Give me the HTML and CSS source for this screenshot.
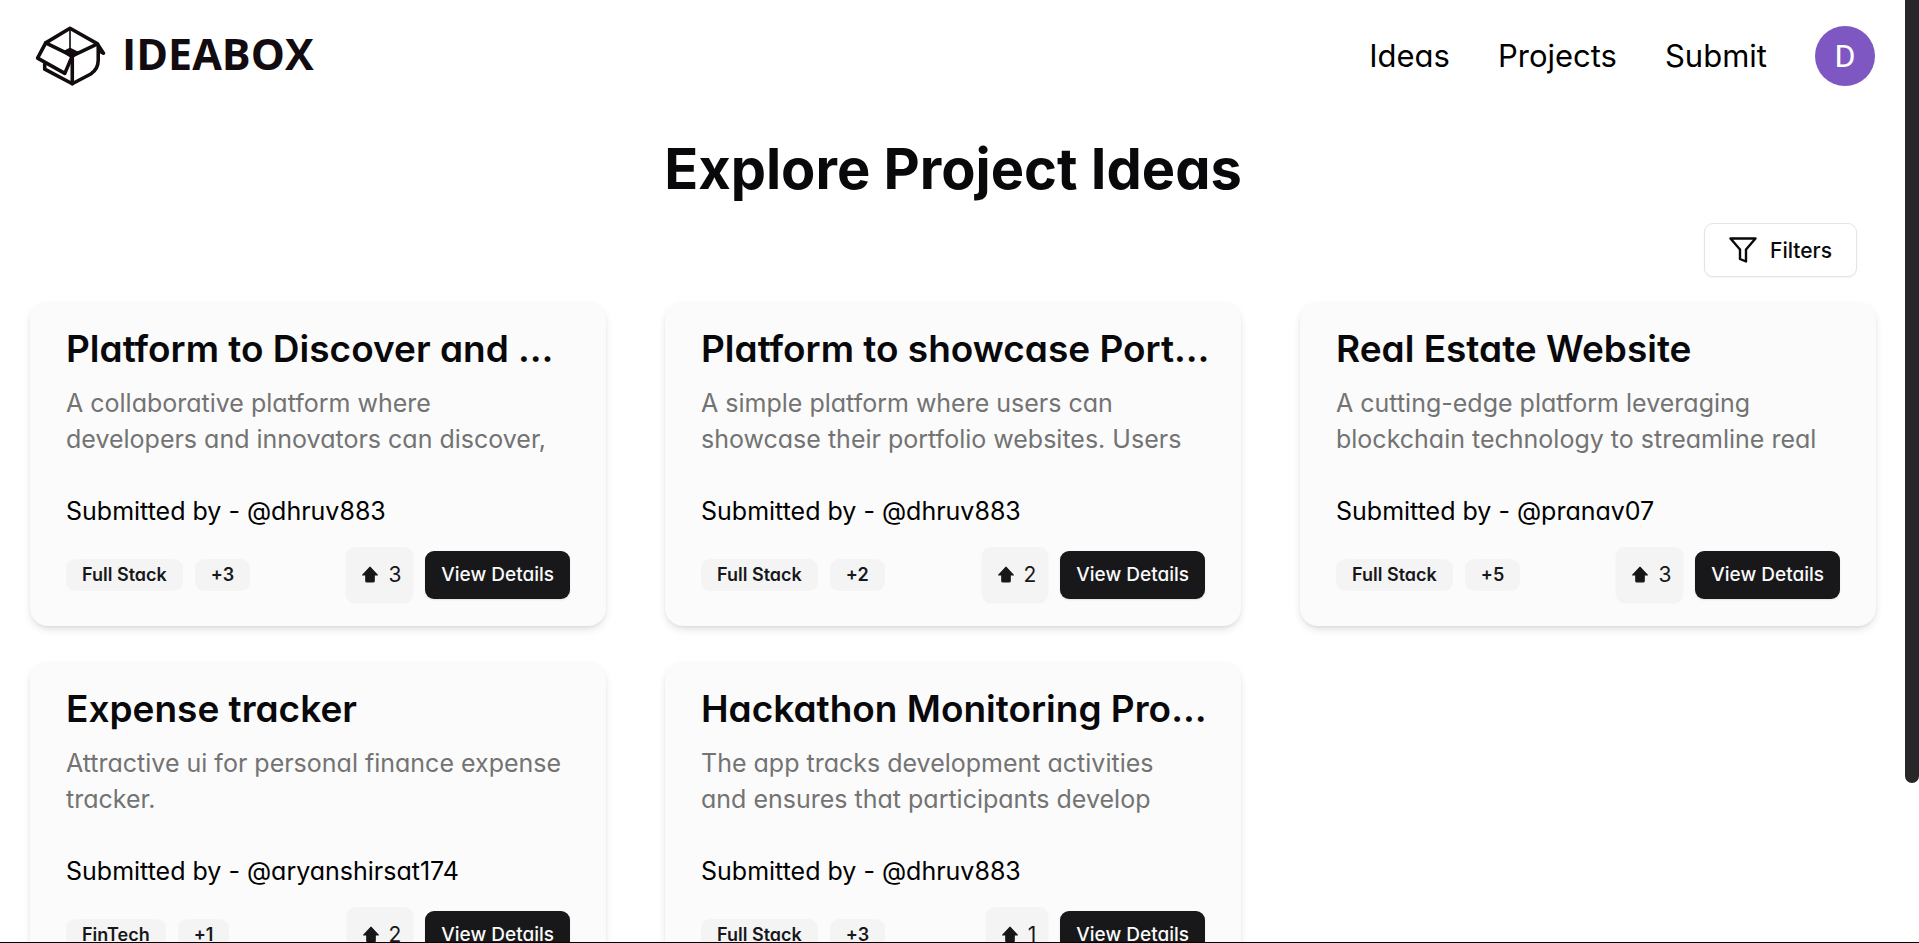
FILE: index.html
```html
<!DOCTYPE html>
<html lang="en">
<head>
<meta charset="utf-8">
<title>Ideabox</title>
<link rel="stylesheet" href="styles.css">
</head>
<body>
<svg class="sprite" aria-hidden="true">
  <symbol id="arrow" viewBox="0 0 16 16"><path d="M8 1 15 8.500H12V14Q12 15 11 15H5Q4 15 4 14V8.500H1Z" fill="currentColor" stroke="currentColor" stroke-width="1" stroke-linejoin="round"/></symbol>
</svg>
<header class="header">
  <a class="brand" href="#">
    <svg class="brand-icon" viewBox="45 45 215 185" fill="none" stroke="currentColor" stroke-width="11" stroke-linejoin="round" stroke-linecap="round">
      <path d="M158 137 76 97 151 52 236 100Z"/>
      <path d="M151 54V125" stroke-width="5"/>
      <path d="M130 125 151 114 176 126 158 144Z" fill="currentColor" stroke-width="4"/>
      <path d="M76 97 51 144 135 191 158 137"/>
      <path d="M73 162V178L158 223V137"/>
      <path d="M158 223 215 193Q238 178 238 150V104L254 129 242 122"/>
    </svg>
    <span class="brand-name">IDEABOX</span>
  </a>
  <nav class="nav">
    <a href="#">Ideas</a>
    <a href="#">Projects</a>
    <a href="#">Submit</a>
    <button class="avatar" type="button">D</button>
  </nav>
</header>
<main class="main">
  <h1 class="heading">Explore Project Ideas</h1>
  <div class="toolbar">
    <button class="filters" type="button">
      <svg class="filters-icon" viewBox="0 0 28 26" fill="none" stroke="currentColor" stroke-width="2.400" stroke-linejoin="round"><path d="M1.500 1.500H26.500L17 12.500V24.500L11 22V12.500Z"/></svg>
      Filters
    </button>
  </div>
  <section class="grid">
    <article class="card">
      <h2 class="title">Platform to Discover and …</h2>
      <p class="desc">A collaborative platform where<br>developers and innovators can discover,</p>
      <p class="author">Submitted by - @dhruv883</p>
      <div class="row"><span class="tag">Full Stack</span><span class="tag">+3</span>
        <button class="vote" type="button"><svg class="arrow"><use href="#arrow"/></svg>3</button><button class="details" type="button">View Details</button></div>
    </article>
    <article class="card">
      <h2 class="title">Platform to showcase Port…</h2>
      <p class="desc">A simple platform where users can<br>showcase their portfolio websites. Users</p>
      <p class="author">Submitted by - @dhruv883</p>
      <div class="row"><span class="tag">Full Stack</span><span class="tag">+2</span>
        <button class="vote" type="button"><svg class="arrow"><use href="#arrow"/></svg>2</button><button class="details" type="button">View Details</button></div>
    </article>
    <article class="card">
      <h2 class="title">Real Estate Website</h2>
      <p class="desc">A cutting-edge platform leveraging<br>blockchain technology to streamline real</p>
      <p class="author">Submitted by - @pranav07</p>
      <div class="row"><span class="tag">Full Stack</span><span class="tag">+5</span>
        <button class="vote" type="button"><svg class="arrow"><use href="#arrow"/></svg>3</button><button class="details" type="button">View Details</button></div>
    </article>
    <article class="card">
      <h2 class="title">Expense tracker</h2>
      <p class="desc">Attractive ui for personal finance expense<br>tracker.</p>
      <p class="author">Submitted by - @aryanshirsat174</p>
      <div class="row"><span class="tag">FinTech</span><span class="tag">+1</span>
        <button class="vote" type="button"><svg class="arrow"><use href="#arrow"/></svg>2</button><button class="details" type="button">View Details</button></div>
    </article>
    <article class="card">
      <h2 class="title">Hackathon Monitoring Pro…</h2>
      <p class="desc">The app tracks development activities<br>and ensures that participants develop</p>
      <p class="author">Submitted by - @dhruv883</p>
      <div class="row"><span class="tag">Full Stack</span><span class="tag">+3</span>
        <button class="vote" type="button"><svg class="arrow"><use href="#arrow"/></svg>1</button><button class="details" type="button">View Details</button></div>
    </article>
  </section>
</main>
<div class="scroll-thumb"></div>
<div class="bottom-line"></div>
</body>
</html>
```
FILE: styles.css
```css
* { box-sizing: border-box; margin: 0; }
html { height: 100%; }
body {
  height: 100vh;
  overflow: hidden;
  padding-right: 14px;
  background: #fff;
  color: #09090b;
  font-family: Inter, "Open Sans", sans-serif;
  font-feature-settings: "cv11";
}
button { font: inherit; font-feature-settings: inherit; color: inherit; border: 0; cursor: pointer; }
a { color: inherit; text-decoration: none; }
.sprite { display: none; }

.header { display: flex; align-items: center; justify-content: space-between; padding: 26px 30px 25px 35px; }
.brand { display: flex; align-items: center; gap: 16px; color: #120b10; }
.brand-icon { width: 71px; height: 60px; }
.brand-name { padding-bottom: 4px; font: 700 43px/56px "Open Sans", sans-serif; }
.nav { display: flex; align-items: center; gap: 48px; font-size: 31px; line-height: 36px; color: #000; }
.avatar { width: 60px; height: 60px; padding: 0; border-radius: 50%; background: #7e57c2; color: #fff; font: 400 32px/60px Roboto, sans-serif; }

.main { padding: 0 29px 36px 30px; }
.heading { padding: 26px 0 22px; font-size: 56px; line-height: 64px; font-weight: 700; text-align: center; }
.toolbar { display: flex; justify-content: flex-end; padding: 0 19px 25px 0; }
.filters {
  display: flex; align-items: center; gap: 13px;
  height: 54px; padding: 0 24px;
  border: 1px solid #e4e4e7; border-radius: 9px; background: #fff;
  box-shadow: 0 1px 2px rgba(0, 0, 0, .05);
  font-size: 21px; font-weight: 500;
}
.filters-icon { width: 28px; height: 26px; }

.grid { display: grid; grid-template-columns: repeat(3, minmax(0, 1fr)); gap: 36px 59px; }
.card {
  padding: 23px 36px 24px;
  border-radius: 18px; background: #fbfbfb;
  box-shadow: 0 4px 8px -1px rgba(0, 0, 0, .12), 0 2px 4px -2px rgba(0, 0, 0, .1);
}
.title { margin-bottom: 12px; font-size: 37px; line-height: 48px; font-weight: 600; white-space: nowrap; }
.desc { height: 72px; margin-bottom: 36px; font-size: 25px; line-height: 36px; color: #737373; white-space: nowrap; }
.author { margin-bottom: 18px; font-size: 25px; line-height: 36px; color: #000; }
.row { display: flex; align-items: center; gap: 12px; color: #18181b; }
.tag { padding: 0 16px; border-radius: 9px; background: #f4f4f5; font-size: 18px; line-height: 32px; font-weight: 600; }
.vote {
  display: flex; align-items: center; gap: 9px;
  height: 55px; margin-left: auto; padding: 0 12px 0 15px;
  border-radius: 9px; background: #f4f4f5;
  box-shadow: 0 1px 2px rgba(0, 0, 0, .05);
  font-size: 21px;
}
.arrow { width: 18px; height: 17px; }
.details {
  height: 48px; padding: 0 16px;
  border-radius: 9px; background: #18181b; color: #fafafa;
  box-shadow: 0 1px 2px rgba(0, 0, 0, .1);
  font-size: 19px; font-weight: 500;
}

.scroll-thumb { position: fixed; top: 0; right: 0; width: 14px; height: 83%; border-radius: 0 0 7px 7px; background: #27272a; }
.bottom-line { position: fixed; left: 0; right: 0; bottom: 0; height: 1px; background: #000; }
```
